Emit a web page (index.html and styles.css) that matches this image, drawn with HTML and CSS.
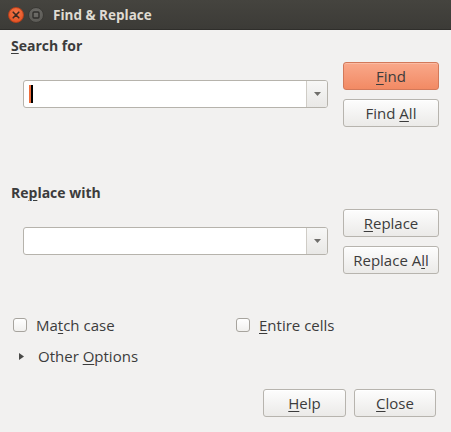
FILE: index.html
```html
<!DOCTYPE html>
<html>
<head>
<meta charset="utf-8">
<link rel="stylesheet" href="styles.css">
</head>
<body>
<div class="window">
  <header class="titlebar">
    <span class="wm-btn wm-close">
      <svg width="8" height="8" viewBox="0 0 8 8"><path d="M1.2 1.2 L6.8 6.8 M6.8 1.2 L1.2 6.8" stroke="#3c2a22" stroke-width="1.6" stroke-linecap="round"/></svg>
    </span>
    <span class="wm-btn wm-min">
      <svg width="8" height="8" viewBox="0 0 8 8"><rect x="1" y="1" width="6" height="6" rx="1" fill="none" stroke="#2f2e2b" stroke-width="1.4"/></svg>
    </span>
    <span class="title">Find &amp; Replace</span>
  </header>

  <main class="content">
    <section class="group">
      <div class="group-main">
        <div class="label"><u>S</u>earch for</div>
        <div class="combo">
          <div class="combo-field"><span class="caret"></span></div>
          <div class="combo-btn"><svg width="7" height="4" viewBox="0 0 7 4"><path d="M0 0 H7 L3.5 4 Z" fill="#6f6e6b"/></svg></div>
        </div>
      </div>
      <div class="group-buttons">
        <button class="btn btn-default"><u>F</u>ind</button>
        <button class="btn">Find <u>A</u>ll</button>
      </div>
    </section>

    <section class="group group-replace">
      <div class="group-main">
        <div class="label">Re<u>p</u>lace with</div>
        <div class="combo">
          <div class="combo-field"></div>
          <div class="combo-btn"><svg width="7" height="4" viewBox="0 0 7 4"><path d="M0 0 H7 L3.5 4 Z" fill="#6f6e6b"/></svg></div>
        </div>
      </div>
      <div class="group-buttons">
        <button class="btn"><u>R</u>eplace</button>
        <button class="btn">Replace A<u>l</u>l</button>
      </div>
    </section>

    <div class="checks">
      <label class="check"><span class="box"></span><span>Ma<u>t</u>ch case</span></label>
      <label class="check"><span class="box"></span><span><u>E</u>ntire cells</span></label>
    </div>

    <div class="expander">
      <svg class="arrow" width="5" height="7" viewBox="0 0 5 7"><path d="M0 0 L5 3.5 L0 7 Z" fill="#4a4a48"/></svg>
      <span>Other <u>O</u>ptions</span>
    </div>

    <div class="actions">
      <button class="btn btn-help"><u>H</u>elp</button>
      <button class="btn btn-close"><u>C</u>lose</button>
    </div>
  </main>
</div>
</body>
</html>
```

FILE: styles.css
```css
html, body {
  margin: 0;
  padding: 0;
}
body {
  background: #f2f1f0;
  font-family: "Open Sans", "Noto Sans", "DejaVu Sans", sans-serif;
  font-size: 15px;
  color: #3c3c3c;
}
.window {
  width: 451px;
  height: 432px;
  background: #f2f1f0;
  overflow: hidden;
}
u {
  text-decoration: underline;
  text-underline-offset: 2px;
  text-decoration-thickness: 1px;
}

/* title bar */
.titlebar {
  height: 30px;
  box-sizing: border-box;
  display: flex;
  align-items: center;
  padding-left: 8px;
  background: linear-gradient(#45443f, #3c3b37);
  border-bottom: 1px solid #2f2e2b;
}
.wm-btn {
  width: 16px;
  height: 16px;
  border-radius: 50%;
  display: flex;
  align-items: center;
  justify-content: center;
  box-sizing: border-box;
}
.wm-close {
  background: radial-gradient(circle at 50% 35%, #f6784a, #df4b1c);
  border: 1px solid #b8401b;
}
.wm-min {
  margin-left: 4px;
  background: radial-gradient(circle at 50% 35%, #6f6e6a, #55544f);
  border: 1px solid #3a3935;
}
.title {
  margin-left: 9px;
  color: #dfdbd2;
  font-weight: bold;
  font-size: 13.5px;
}

/* content */
.content {
  padding: 0 12px 0 11px;
}
.group {
  display: flex;
  padding-top: 7px;
}
.group-replace {
  margin-top: 50px;
}
.group-main {
  flex: 1;
}
.label {
  font-weight: bold;
  font-size: 14px;
  line-height: 18px;
  height: 18px;
  color: #3c3c3c;
}
.combo {
  margin: 25px 15px 0 12px;
  height: 28px;
  display: flex;
  box-sizing: border-box;
  border: 1px solid #b6b3ac;
  border-radius: 3px;
  background: #fff;
  overflow: hidden;
}
.combo-field {
  flex: 1;
  display: flex;
  align-items: center;
  padding-left: 5px;
}
.caret {
  width: 2px;
  height: 18px;
  border-left: 2px solid #ef6c3a;
  background: #000;
}
.combo-btn {
  width: 20px;
  border-left: 1px solid #cfccc6;
  background: linear-gradient(#f7f7f6, #e9e8e6);
  display: flex;
  align-items: center;
  justify-content: center;
}
.group-buttons {
  width: 96px;
  padding-top: 25px;
  display: flex;
  flex-direction: column;
  gap: 9px;
}
.btn {
  height: 28px;
  box-sizing: border-box;
  border: 1px solid #b7b4ae;
  border-radius: 3px;
  background: linear-gradient(#fdfdfd, #ebeae8);
  font-family: inherit;
  font-size: 15px;
  color: #3c3c3c;
  padding: 0;
  box-shadow: inset 0 1px 0 #ffffff;
}
.btn-default {
  background: linear-gradient(#f9a88a, #f28a64);
  border-color: #d2795a;
  box-shadow: inset 0 1px 0 #fbbba3;
}

/* checkboxes */
.checks {
  margin-top: 42px;
  display: grid;
  grid-template-columns: 223px 1fr;
  padding-left: 2px;
}
.check {
  display: flex;
  align-items: center;
  line-height: 18px;
  gap: 9px;
}
.box {
  width: 14px;
  height: 14px;
  box-sizing: border-box;
  border: 1px solid #a7a49e;
  border-radius: 3px;
  background: linear-gradient(#ffffff, #f1f0ee);
}

/* expander */
.expander {
  margin-top: 13px;
  display: flex;
  align-items: center;
  line-height: 18px;
  padding-left: 8px;
}
.arrow {
  margin-right: 14px;
}

/* actions */
.actions {
  margin-top: 24px;
  margin-right: 3px;
  display: flex;
  justify-content: flex-end;
  gap: 8px;
}
.btn-help {
  width: 83px;
}
.btn-close {
  width: 82px;
}
```
